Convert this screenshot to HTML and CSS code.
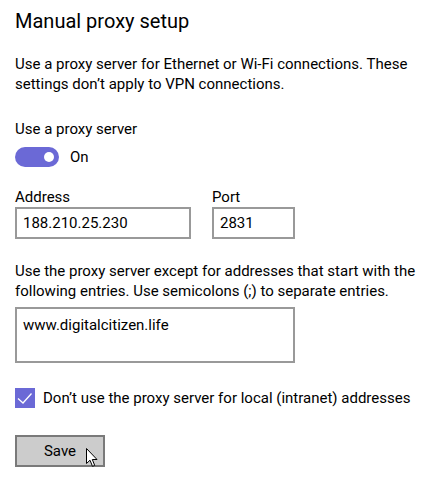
FILE: index.html
```html
<!DOCTYPE html>
<html lang="en">
<head>
    <meta charset="UTF-8">
    <title>Manual proxy setup</title>
    <link rel="stylesheet" href="styles.css">
</head>
<body>
    <h1 class="title">Manual proxy setup</h1>
    <p class="desc">Use a proxy server for Ethernet or Wi-Fi connections. These<br>settings don’t apply to VPN connections.</p>

    <div class="label">Use a proxy server</div>
    <div class="toggle-row">
        <span class="toggle"><span class="knob"></span></span>
        <span>On</span>
    </div>

    <div class="fields">
        <div class="field">
            <div class="field-label">Address</div>
            <div class="box address">188.210.25.230</div>
        </div>
        <div class="field">
            <div class="field-label">Port</div>
            <div class="box port">2831</div>
        </div>
    </div>

    <p class="desc except">Use the proxy server except for addresses that start with the<br>following entries. Use semicolons (;) to separate entries.</p>
    <div class="box area">www.digitalcitizen.life</div>

    <div class="check-row">
        <span class="check">
            <svg width="20" height="20" viewBox="0 0 20 20"><path d="M3 10.5 L8 15 L16.5 5.5" fill="none" stroke="#fff" stroke-width="1.3"/></svg>
        </span>
        <span>Don’t use the proxy server for local (intranet) addresses</span>
    </div>

    <div class="button-row">
        <span class="button">Save</span>
        <svg class="cursor" width="14" height="20" viewBox="0 0 14 20"><path d="M0.5 0.5 L0.5 15.5 L4 12.2 L6.5 18.3 L8.7 17.4 L6.3 11.5 L11 11.5 Z" fill="#fff" stroke="#000" stroke-width="1"/></svg>
    </div>
</body>
</html>
```

FILE: styles.css
```css
body {
    font-family: Roboto, "Noto Sans", sans-serif;
    font-size: 15px;
    line-height: 20px;
    color: #000;
    background: #fff;
    margin: 0;
    padding: 0 15px;
}
.title {
    font-size: 20px;
    font-weight: normal;
    line-height: 28px;
    margin: 7px 0 0;
}
.desc {
    margin: 19px 0 0;
    white-space: nowrap;
}
.label {
    margin-top: 25px;
}
.toggle-row {
    display: flex;
    align-items: center;
    gap: 11px;
    margin-top: 8px;
    height: 20px;
}
.toggle {
    width: 44px;
    height: 20px;
    border-radius: 10px;
    background: #6b69d6;
    position: relative;
}
.knob {
    position: absolute;
    right: 5px;
    top: 5px;
    width: 10px;
    height: 10px;
    border-radius: 50%;
    background: #fff;
}
.fields {
    display: flex;
    gap: 21px;
    margin-top: 20px;
}
.box {
    border: 2px solid #999;
    height: 28px;
    line-height: 28px;
    padding: 0 6px;
    box-sizing: content-box;
}
.address {
    width: 160px;
}
.port {
    width: 67px;
}
.except {
    margin-top: 22px;
}
.area {
    width: 264px;
    height: 46px;
    line-height: 20px;
    padding-top: 6px;
    margin-top: 6px;
}
.check-row {
    display: flex;
    align-items: center;
    gap: 8px;
    margin-top: 25px;
}
.check {
    width: 20px;
    height: 20px;
    background: #6b69d6;
    display: block;
}
.check svg {
    display: block;
}
.button-row {
    display: flex;
    margin-top: 27px;
    position: relative;
}
.button {
    width: 86px;
    height: 28px;
    line-height: 28px;
    border: 2px solid #7a7a7a;
    background: #ccc;
    text-align: center;
}
.cursor {
    position: absolute;
    left: 71px;
    top: 13px;
}
```
